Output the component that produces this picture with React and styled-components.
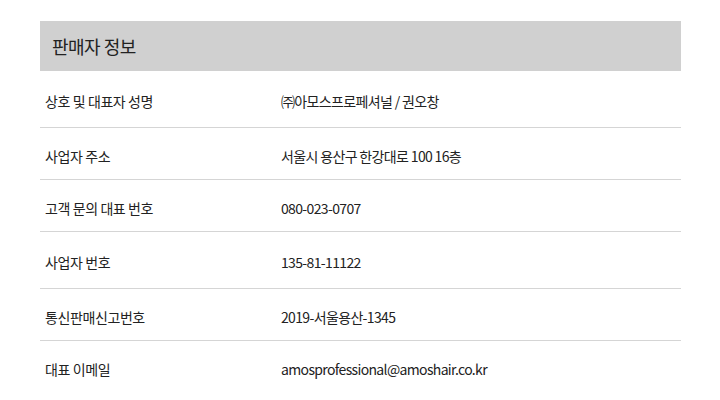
import styled, { createGlobalStyle } from 'styled-components';

const GlobalStyle = createGlobalStyle`
  body {
    margin: 0;
    background: #fff;
    font-family: "Noto Sans CJK KR", "Noto Sans", sans-serif;
    color: #222;
  }
`;

const Section = styled.section`
  padding: 21px 39px 0 40px;
`;

const Header = styled.h2`
  margin: 0;
  height: 50px;
  display: flex;
  align-items: center;
  padding-left: 12px;
  background: #d0d0d0;
  font-size: 18px;
  font-weight: 400;
  letter-spacing: -0.5px;
  color: #222;
`;

const Table = styled.dl`
  margin: 0;
`;

const Row = styled.div`
  display: grid;
  grid-template-columns: 241px 1fr;
  align-items: center;
  height: ${(p) => p.$h}px;
  padding-top: 4px;
  box-sizing: border-box;
  border-bottom: ${(p) => (p.$last ? 'none' : '1px solid #d5d5d5')};
  font-size: 14px;
  letter-spacing: -0.4px;
`;

const Label = styled.dt`
  padding-left: 5px;
`;

const Value = styled.dd`
  margin: 0;
  letter-spacing: -0.65px;
`;

const rows = [
  ['상호 및 대표자 성명', '㈜아모스프로페셔널 / 권오창', 57],
  ['사업자 주소', '서울시 용산구 한강대로 100 16층', 52],
  ['고객 문의 대표 번호', '080-023-0707', 52],
  ['사업자 번호', '135-81-11122', 57],
  ['통신판매신고번호', '2019-서울용산-1345', 52],
  ['대표 이메일', 'amosprofessional@amoshair.co.kr', 52],
];

export default function App() {
  return (
    <>
      <GlobalStyle />
      <Section>
        <Header>판매자 정보</Header>
        <Table>
          {rows.map(([label, value, h], i) => (
            <Row key={label} $h={h} $last={i === rows.length - 1}>
              <Label>{label}</Label>
              <Value>{value}</Value>
            </Row>
          ))}
        </Table>
      </Section>
    </>
  );
}
